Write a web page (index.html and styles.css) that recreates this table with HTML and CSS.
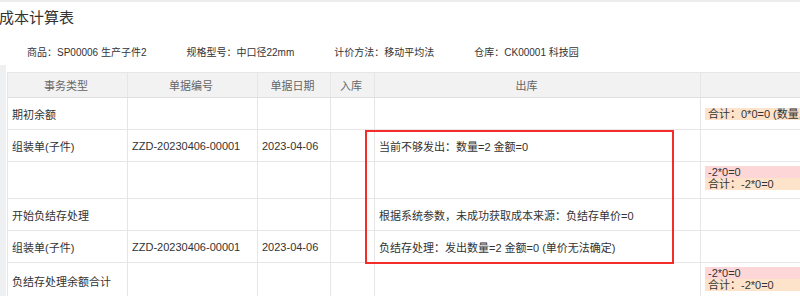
FILE: index.html
```html
<!DOCTYPE html>
<html lang="zh">
<head>
<meta charset="utf-8">
<title>成本计算表</title>
<link rel="stylesheet" href="styles.css">
</head>
<body>
<div class="topbar"></div>
<h1 class="title">成本计算表</h1>
<div class="info">
  <span>商品：SP00006 生产子件2</span>
  <span>规格型号：中口径22mm</span>
  <span>计价方法：移动平均法</span>
  <span>仓库：CK00001 科技园</span>
</div>
<div class="grid-wrap">
  <div class="edge"></div>
  <table class="grid">
    <colgroup>
      <col class="c1"><col class="c2"><col class="c3"><col class="c4"><col class="c5"><col class="c6">
    </colgroup>
    <thead>
      <tr>
        <th>事务类型</th>
        <th>单据编号</th>
        <th>单据日期</th>
        <th>入库</th>
        <th class="th-out">出库</th>
        <th></th>
      </tr>
    </thead>
    <tbody>
      <tr>
        <td>期初余额</td><td></td><td></td><td></td><td></td>
        <td class="bal"><span class="tag tag-sum">合计：0*0=0 (数量,单价)</span></td>
      </tr>
      <tr>
        <td>组装单(子件)</td><td>ZZD-20230406-00001</td><td>2023-04-06</td><td></td>
        <td>当前不够发出：数量=2 金额=0</td><td></td>
      </tr>
      <tr class="tall">
        <td></td><td></td><td></td><td></td><td></td>
        <td class="bal"><span class="tag tag-neg">-2*0=0</span><span class="tag tag-sum">合计：-2*0=0</span></td>
      </tr>
      <tr>
        <td>开始负结存处理</td><td></td><td></td><td></td>
        <td>根据系统参数，未成功获取成本来源：负结存单价=0</td><td></td>
      </tr>
      <tr>
        <td>组装单(子件)</td><td>ZZD-20230406-00001</td><td>2023-04-06</td><td></td>
        <td>负结存处理：发出数量=2 金额=0 (单价无法确定)</td><td></td>
      </tr>
      <tr class="tall">
        <td>负结存处理余额合计</td><td></td><td></td><td></td><td></td>
        <td class="bal"><span class="tag tag-neg">-2*0=0</span><span class="tag tag-sum">合计：-2*0=0</span></td>
      </tr>
    </tbody>
  </table>
</div>
<div class="annot"></div>
</body>
</html>
```
FILE: styles.css
```css
html, body {
  margin: 0;
  padding: 0;
  background: #fff;
  overflow: hidden;
  width: 800px;
  height: 296px;
}
body {
  font-family: "Liberation Sans", "Noto Sans CJK SC", sans-serif;
  color: #333;
  position: relative;
}
.topbar {
  height: 2px;
  background: #ececec;
}
.title {
  margin: 0;
  height: 30px;
  line-height: 32px;
  font-size: 15px;
  font-weight: normal;
  color: #333;
  text-indent: -1px;
}
.info {
  height: 33px;
  box-sizing: border-box;
  padding: 14px 0 0 27px;
  line-height: 14px;
  font-size: 10px;
  display: flex;
  gap: 40px;
  color: #333;
  white-space: nowrap;
}
.grid-wrap {
  display: flex;
  align-items: flex-start;
  height: 240px;
}
.edge {
  width: 6px;
  align-self: stretch;
  background: #eef0f2;
  flex: none;
}
.grid {
  margin: 7px 0 0 1px;
  border-collapse: collapse;
  table-layout: fixed;
  width: 900px;
  flex: none;
  font-size: 11px;
}
.c1 { width: 120px; }
.c2 { width: 130px; }
.c3 { width: 73px; }
.c4 { width: 44px; }
.c5 { width: 326px; }
.c6 { width: 207px; }
.grid th, .grid td {
  border: 1px solid #e6e6e6;
  padding: 0 4px;
  white-space: nowrap;
  overflow: hidden;
}
.grid th {
  height: 24px;
  background: #f2f2f2;
  color: #666;
  font-weight: normal;
  text-align: center;
  padding-right: 7px;
  border-bottom-color: #e0e0e0;
}
.grid th.th-out {
  padding-right: 26px;
}
.grid td {
  height: 31px;
  text-align: left;
  vertical-align: middle;
}
.grid tr.tall td {
  height: 23px;
}
.grid td.bal {
  padding: 4px 4px 8px 4px;
}
.grid tr:first-child td.bal {
  padding: 0 4px;
}
.tag {
  display: block;
  height: 12px;
  line-height: 12px;
  padding: 0 3px;
  color: #333;
}
.tag-neg {
  background: #fdd7d7;
}
.tag-sum {
  background: #fee3cb;
}
.annot {
  position: absolute;
  left: 365px;
  top: 130px;
  width: 309px;
  height: 134px;
  box-sizing: border-box;
  border: 2px solid #f52c2c;
  pointer-events: none;
}
```
